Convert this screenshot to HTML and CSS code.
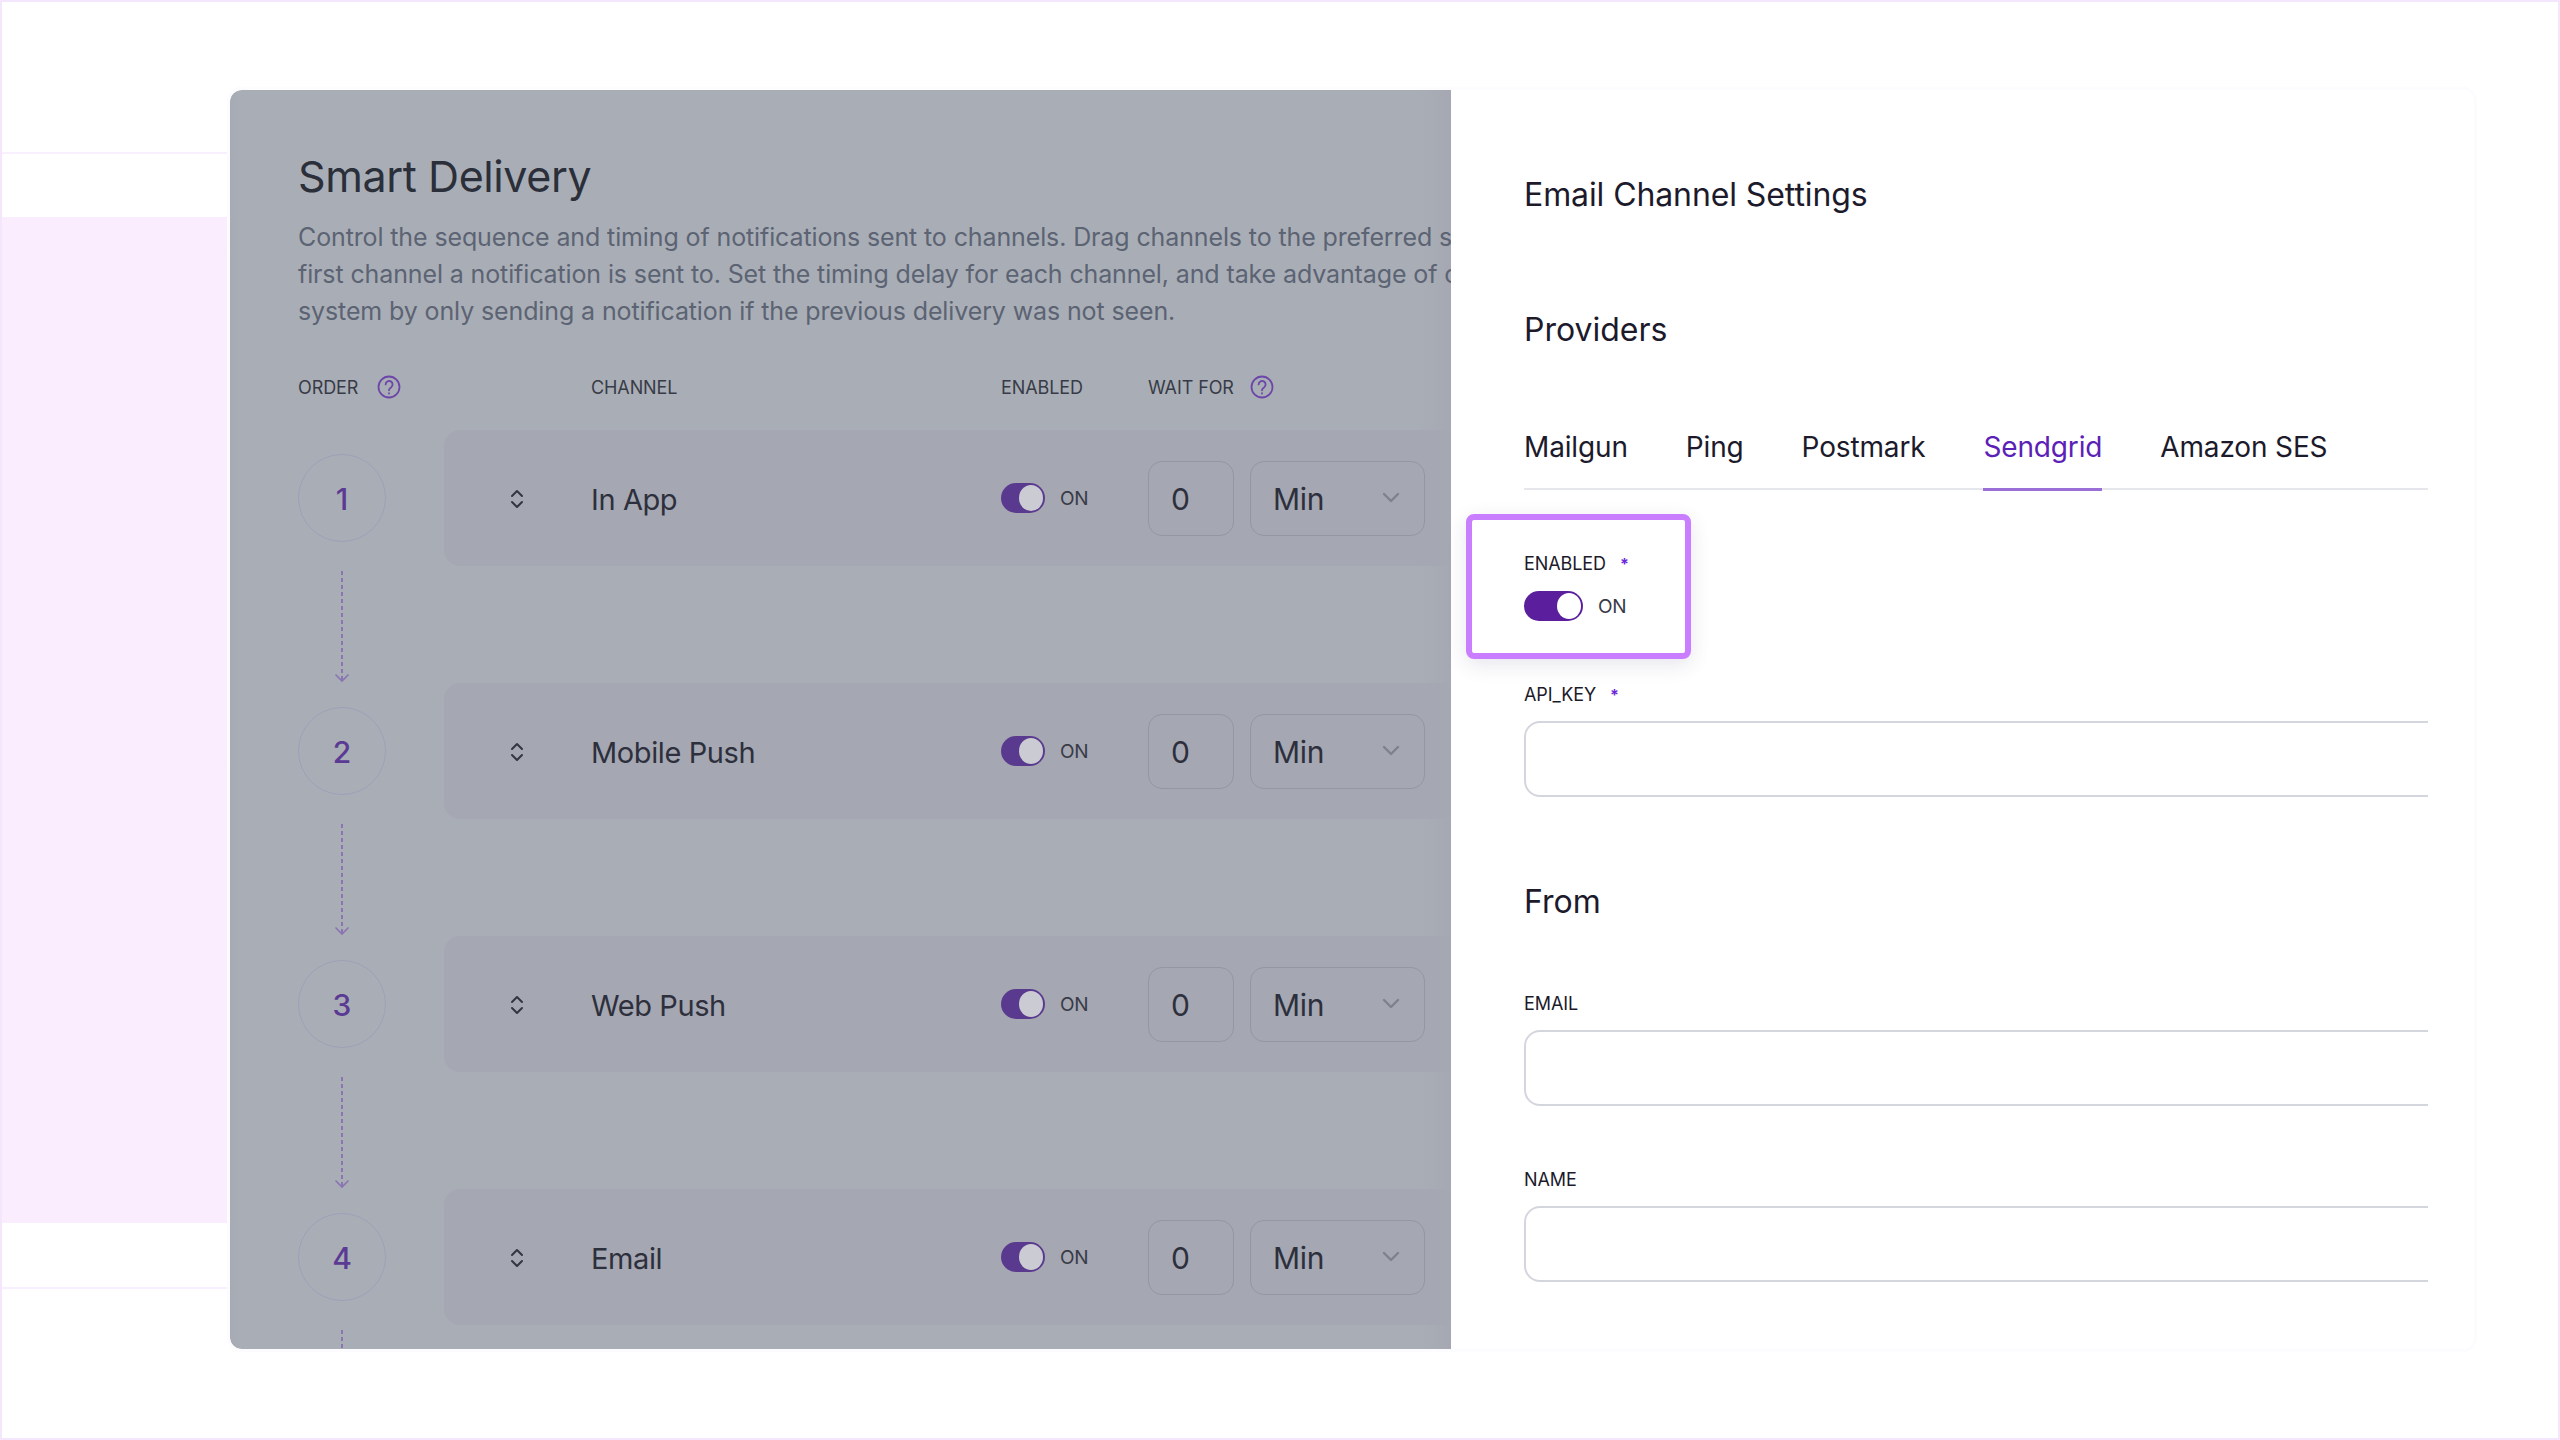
FILE: index.html
```html
<!DOCTYPE html>
<html lang="en">
<head>
<meta charset="utf-8">
<title>Smart Delivery</title>
<link rel="stylesheet" href="styles.css">
</head>
<body>
<div class="frame">
  <aside class="backdrop">
    <div class="bd-top"></div>
    <div class="bd-gap"></div>
    <div class="bd-band"></div>
    <div class="bd-gap bd-gap-low"></div>
  </aside>
  <main class="dialog">
    <section class="delivery">
      <h1 class="title">Smart Delivery</h1>
      <p class="intro">
        <span class="intro-line">Control the sequence and timing of notifications sent to channels. Drag channels to the preferred sequence to choose the</span>
        <span class="intro-line">first channel a notification is sent to. Set the timing delay for each channel, and take advantage of our intelligent</span>
        <span class="intro-line">system by only sending a notification if the previous delivery was not seen.</span>
      </p>
      <div class="heads">
        <div class="head">ORDER
          <svg class="help" viewBox="0 0 24 24"><circle cx="12" cy="12" r="10.5"/><path d="M8.6 9.4a3.5 3.5 0 1 1 5.4 3c-1.3.8-2 1.5-2 2.9"/><path d="M12 18.2v.3"/></svg>
        </div>
        <div class="head">CHANNEL</div>
        <div class="head">ENABLED</div>
        <div class="head">WAIT FOR
          <svg class="help help-wait" viewBox="0 0 24 24"><circle cx="12" cy="12" r="10.5"/><path d="M8.6 9.4a3.5 3.5 0 1 1 5.4 3c-1.3.8-2 1.5-2 2.9"/><path d="M12 18.2v.3"/></svg>
        </div>
      </div>

      <div class="step">
        <div class="num">1</div>
        <div class="row">
          <svg class="sort" viewBox="0 0 14 22"><path d="M2 8l5-5 5 5M2 14l5 5 5-5"/></svg>
          <div class="name">In App</div>
          <div class="toggle-wrap"><span class="toggle muted"><i></i></span><span class="on">ON</span></div>
          <div class="box">0</div>
          <div class="box select">Min<svg class="caret" viewBox="0 0 18 12"><path d="M2 2l7 7 7-7"/></svg></div>
        </div>
        <svg class="link" viewBox="0 0 20 117"><path class="dash" d="M10 5V114"/><path class="tip" d="M3.5 108.5l6.5 6.5 6.5-6.5"/></svg>
      </div>

      <div class="step">
        <div class="num">2</div>
        <div class="row">
          <svg class="sort" viewBox="0 0 14 22"><path d="M2 8l5-5 5 5M2 14l5 5 5-5"/></svg>
          <div class="name">Mobile Push</div>
          <div class="toggle-wrap"><span class="toggle muted"><i></i></span><span class="on">ON</span></div>
          <div class="box">0</div>
          <div class="box select">Min<svg class="caret" viewBox="0 0 18 12"><path d="M2 2l7 7 7-7"/></svg></div>
        </div>
        <svg class="link" viewBox="0 0 20 117"><path class="dash" d="M10 5V114"/><path class="tip" d="M3.5 108.5l6.5 6.5 6.5-6.5"/></svg>
      </div>

      <div class="step">
        <div class="num">3</div>
        <div class="row">
          <svg class="sort" viewBox="0 0 14 22"><path d="M2 8l5-5 5 5M2 14l5 5 5-5"/></svg>
          <div class="name">Web Push</div>
          <div class="toggle-wrap"><span class="toggle muted"><i></i></span><span class="on">ON</span></div>
          <div class="box">0</div>
          <div class="box select">Min<svg class="caret" viewBox="0 0 18 12"><path d="M2 2l7 7 7-7"/></svg></div>
        </div>
        <svg class="link" viewBox="0 0 20 117"><path class="dash" d="M10 5V114"/><path class="tip" d="M3.5 108.5l6.5 6.5 6.5-6.5"/></svg>
      </div>

      <div class="step">
        <div class="num">4</div>
        <div class="row">
          <svg class="sort" viewBox="0 0 14 22"><path d="M2 8l5-5 5 5M2 14l5 5 5-5"/></svg>
          <div class="name">Email</div>
          <div class="toggle-wrap"><span class="toggle muted"><i></i></span><span class="on">ON</span></div>
          <div class="box">0</div>
          <div class="box select">Min<svg class="caret" viewBox="0 0 18 12"><path d="M2 2l7 7 7-7"/></svg></div>
        </div>
        <svg class="link" viewBox="0 0 20 117"><path class="dash" d="M10 5V114"/><path class="tip" d="M3.5 108.5l6.5 6.5 6.5-6.5"/></svg>
      </div>
    </section>

    <section class="settings">
      <h2 class="settings-title">Email Channel Settings</h2>
      <h3 class="section-title providers">Providers</h3>
      <nav class="tabs">
        <span class="tab">Mailgun</span>
        <span class="tab">Ping</span>
        <span class="tab">Postmark</span>
        <span class="tab active">Sendgrid</span>
        <span class="tab">Amazon SES</span>
      </nav>
      <div class="field field-enabled">
        <div class="highlight"></div>
        <label class="label">ENABLED<b class="req">*</b></label>
        <div class="toggle-wrap toggle-big"><span class="toggle live"><i></i></span><span class="on">ON</span></div>
      </div>
      <div class="field field-key">
        <label class="label">API_KEY<b class="req">*</b></label>
        <div class="clip"><div class="input"></div></div>
      </div>
      <h3 class="section-title from">From</h3>
      <div class="field field-email">
        <label class="label">EMAIL</label>
        <div class="clip"><div class="input"></div></div>
      </div>
      <div class="field field-name">
        <label class="label">NAME</label>
        <div class="clip"><div class="input"></div></div>
      </div>
    </section>
  </main>
</div>
</body>
</html>
```
FILE: styles.css
```css
* { box-sizing: border-box; }
html, body { margin: 0; padding: 0; }
body { font-family: "Inter", "Liberation Sans", sans-serif; background: #fff; }

.frame {
  width: 2560px;
  height: 1440px;
  border: 2px solid #f4e6fd;
  display: flex;
  align-items: flex-start;
  overflow: hidden;
  background: #fff;
}

.backdrop { width: 225px; flex: none; }
.bd-top { height: 152px; border-bottom: 2px solid #f8f0fe; }
.bd-gap { height: 63px; }
.bd-band { height: 1006px; background: #f9edfe; }
.bd-gap-low { height: 66px; border-bottom: 2px solid #f8f0fe; }

.dialog {
  width: 2250px;
  height: 1265px;
  margin-top: 85px;
  display: flex;
  border: 3px solid #fcfcff;
  border-radius: 14px;
  overflow: hidden;
  flex: none;
}

/* dimmed left panel */
.delivery {
  width: 1221px;
  flex: none;
  padding: 61px 0 0 68px;
  overflow: hidden;
  border-radius: 12px 0 0 12px;
  background: linear-gradient(90deg, #a6aab4 0, #a9aeb6 10px, #a9aeb6 1190px, #a5a8b2 1221px);
  color: #2d303c;
}
.title {
  margin: 0;
  font-size: 43px;
  line-height: 50px;
  font-weight: 400;
  letter-spacing: -0.4px;
  color: #2b2f3a;
}
.intro {
  margin: 17.5px 0 0;
  font-size: 25px;
  line-height: 37px;
  letter-spacing: -0.12px;
  color: #5c6373;
  white-space: nowrap;
}
.intro-line { display: block; }

.heads {
  margin-top: 42.5px;
  height: 30px;
  display: grid;
  grid-template-columns: 293px 410px 147px 1fr;
  align-items: center;
}
.head {
  display: flex;
  align-items: center;
  font-size: 18px;
  letter-spacing: -0.1px;
  color: #383b47;
}
.help {
  width: 24px;
  height: 24px;
  margin-left: 19px;
  fill: none;
  stroke: #6c46a8;
  stroke-width: 1.8;
  stroke-linecap: round;
}
.help-wait { margin-left: 16px; }

.step {
  display: grid;
  grid-template-columns: 88px 1007px;
  grid-template-rows: 136px 117px;
  column-gap: 58px;
}
.heads + .step { margin-top: 28px; }
.num {
  align-self: center;
  width: 88px;
  height: 88px;
  border: 1.5px solid #9f9fb8;
  border-radius: 50%;
  display: flex;
  align-items: center;
  justify-content: center;
  padding-top: 2px;
  font-size: 30px;
  font-weight: 500;
  color: #5b3a94;
}
.row {
  display: grid;
  grid-template-columns: 147px 410px 147px 86px 191px;
  align-items: center;
  background: #a5a7b2;
  border-radius: 16px 0 0 16px;
}
.sort {
  width: 14px;
  height: 22px;
  justify-self: center;
  margin: 2px 2px 0 0;
  fill: none;
  stroke: #333641;
  stroke-width: 2;
  stroke-linecap: round;
  stroke-linejoin: round;
}
.name {
  padding-top: 2px;
  font-size: 29px;
  letter-spacing: -0.4px;
  color: #2d303c;
}
.toggle-wrap { display: flex; align-items: center; }
.toggle {
  display: flex;
  justify-content: flex-end;
  align-items: center;
  width: 44px;
  height: 30px;
  border-radius: 15px;
  padding-right: 2px;
  flex: none;
}
.toggle i { display: block; width: 24px; height: 26px; border-radius: 50%; }
.toggle.muted { background: #5a3a8e; }
.toggle.muted i { background: #cbccd3; }
.toggle.live { background: #5b1f9e; width: 59px; }
.toggle.live i { background: #fff; }
.on { font-size: 19px; margin-left: 15px; padding-top: 1px; letter-spacing: -0.2px; color: #383b47; }
.box {
  height: 75px;
  border: 1.5px solid #9497a2;
  border-radius: 14px;
  display: flex;
  align-items: center;
  padding: 2px 0 0 22px;
  font-size: 30px;
  letter-spacing: -0.3px;
  color: #2d303c;
}
.select {
  margin-left: 16px;
  justify-content: space-between;
  padding-right: 24px;
}
.caret {
  width: 18px;
  height: 12px;
  margin-top: -2px;
  fill: none;
  stroke: #7e828c;
  stroke-width: 2.4;
  stroke-linecap: round;
  stroke-linejoin: round;
}
.link {
  grid-column: 1;
  grid-row: 2;
  width: 20px;
  height: 117px;
  justify-self: center;
  fill: none;
}
.dash { stroke: #8a74b2; stroke-width: 2; stroke-dasharray: 4 3; }
.tip { stroke: #8a74b2; stroke-width: 1.6; }

/* right settings panel */
.settings {
  flex: 1;
  min-width: 0;
  padding: 82px 46px 0 73px;
  background: #fff;
  color: #1c1a2b;
}
.settings-title {
  margin: 0;
  font-size: 32px;
  line-height: 45px;
  font-weight: 400;
  letter-spacing: -0.1px;
  color: #1c1a2b;
}
.section-title {
  margin: 0;
  font-size: 32px;
  line-height: 40px;
  font-weight: 400;
  color: #1c1a2b;
}
.providers { margin-top: 93px; }
.from { margin-top: 85px; }
.tabs {
  margin-top: 75px;
  height: 65px;
  display: flex;
  gap: 58px;
  border-bottom: 2px solid #e6e7ec;
}
.tab {
  height: 66px;
  font-size: 28px;
  line-height: 44px;
  letter-spacing: -0.15px;
  color: #1c1a2b;
}
.tab.active {
  color: #5b21b6;
  border-bottom: 3px solid #9a6fd6;
}
.field { position: relative; }
.label {
  display: block;
  height: 24px;
  font-size: 18px;
  line-height: 26px;
  letter-spacing: -0.1px;
  color: #1c1a2b;
}
.req { margin-left: 14px; color: #6d28d9; font-weight: 700; font-size: 16px; }
.field-enabled { margin-top: 61px; }
.field-enabled .toggle-wrap { margin-top: 16px; }
.field-key { margin-top: 61px; }
.field-email { margin-top: 69px; }
.field-name { margin-top: 61px; }
.clip { margin-top: 15px; overflow: hidden; }
.input {
  width: 1100px;
  height: 76px;
  border: 2px solid #d4d6de;
  border-radius: 16px;
  background: #fff;
}
.highlight {
  position: absolute;
  left: -58px;
  top: -37px;
  width: 225px;
  height: 145px;
  border: 6px solid #c97dff;
  border-radius: 8px;
  box-shadow: 0 6px 20px rgba(60, 40, 90, 0.12);
}
```
